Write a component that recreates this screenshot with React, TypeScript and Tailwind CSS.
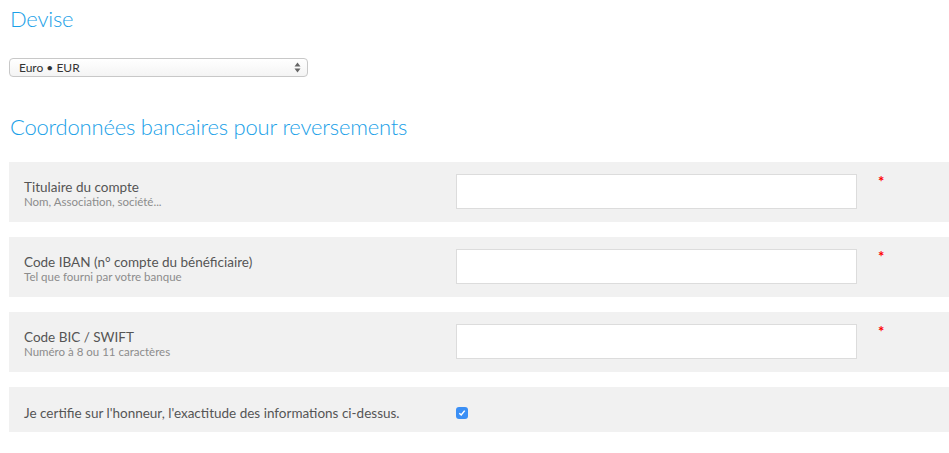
import React from 'react';

const font = { fontFamily: 'Lato, "Open Sans", sans-serif' };

function Row({ title, hint }: { title: string; hint: string }) {
  return (
    <div className="flex h-[60px] bg-[#f1f1f1] pl-[15px]">
      <div className="flex w-[432px] flex-col justify-center pt-[2px]">
        <div className="text-[13.5px] leading-[16px] text-[#555]">{title}</div>
        <div className="text-[11.5px] leading-[13px] text-[#8c8c8c]">{hint}</div>
      </div>
      <div className="pt-[12px]">
        <input type="text" className="h-[35px] w-[401px] border border-[#dcdcdc] bg-white outline-none" />
      </div>
      <div className="ml-[21px] pt-[12px] text-[15px] leading-[14px] font-bold text-[#ff0000]">*</div>
    </div>
  );
}

export default function App() {
  return (
    <div className="min-h-screen bg-white pl-[9px]" style={font}>
      <h2 className="pt-[5px] pl-[1px] text-[22px] leading-[28px] font-light tracking-[-0.2px] text-[#1a9fe8]">Devise</h2>
      <div className="mt-[25px] flex h-[19px] w-[299px] items-center justify-between rounded-[4px] border border-[#c8c8c8] bg-gradient-to-b from-white to-[#f4f4f4] pr-[6px] pl-[9px]">
        <span className="text-[12px] leading-[14px] text-[#333]">Euro • EUR</span>
        <svg width="7" height="11" viewBox="0 0 7 11">
          <path d="M3.5 0.5 L6.5 4.5 L0.5 4.5 Z" fill="#666" />
          <path d="M3.5 10.5 L6.5 6.5 L0.5 6.5 Z" fill="#666" />
        </svg>
      </div>
      <h2 className="mt-[36px] pl-[1px] text-[22px] leading-[28px] font-light tracking-[-0.2px] text-[#1a9fe8]">Coordonnées bancaires pour reversements</h2>
      <div className="mt-[21px] flex flex-col gap-[15px]">
        <Row title="Titulaire du compte" hint="Nom, Association, société..." />
        <Row title="Code IBAN (n° compte du bénéficiaire)" hint="Tel que fourni par votre banque" />
        <Row title="Code BIC / SWIFT" hint="Numéro à 8 ou 11 caractères" />
        <div className="flex h-[45px] items-center bg-[#f1f1f1] pl-[15px]">
          <div className="w-[432px] pt-[6px] text-[13.5px] leading-[16px] text-[#555]">Je certifie sur l'honneur, l'exactitude des informations ci-dessus.</div>
          <div className="mt-[6px] flex h-[12px] w-[12px] items-center justify-center rounded-[3px] bg-[#3b8ff5]">
            <svg width="8" height="8" viewBox="0 0 8 8">
              <path d="M1.3 4.2 L3.2 6 L6.7 1.6" stroke="white" strokeWidth="1.5" fill="none" />
            </svg>
          </div>
        </div>
      </div>
    </div>
  );
}
